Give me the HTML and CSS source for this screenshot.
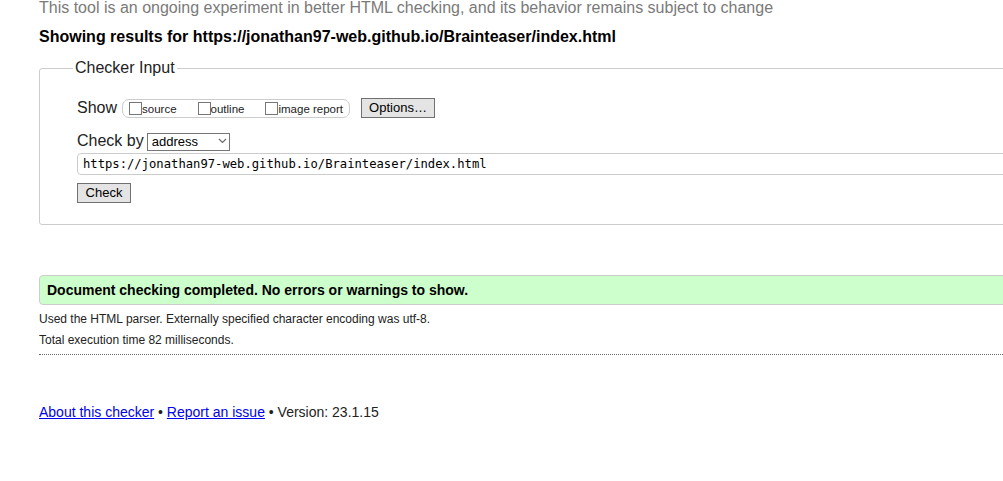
FILE: index.html
```html
<!DOCTYPE html>
<html lang="en">
<head>
<meta charset="utf-8">
<title>Nu Html Checker</title>
<link rel="stylesheet" href="styles.css">
</head>
<body>
<div class="page">
  <p class="intro">This tool is an ongoing experiment in better HTML checking, and its behavior remains subject to change</p>
  <p class="results-for">Showing results for https://jonathan97-web.github.io/Brainteaser/index.html</p>
  <fieldset class="checker">
    <legend class="checker-legend">Checker Input</legend>
    <div class="row show-row">
      <span class="row-label">Show</span>
      <span class="show-box">
        <label class="opt"><input class="cb" type="checkbox">source</label>
        <label class="opt"><input class="cb" type="checkbox">outline</label>
        <label class="opt opt-last"><input class="cb" type="checkbox">image report</label>
      </span>
      <button class="btn btn-options" type="button">Options…</button>
    </div>
    <div class="row by-row">
      <span class="row-label">Check by</span>
      <span class="select-wrap">
        <select class="select"><option>address</option></select>
        <svg class="chevron" width="9" height="6" viewBox="0 0 9 6"><path d="M1 1 L4.5 4.5 L8 1" fill="none" stroke="#6b6b6b" stroke-width="1.2"/></svg>
      </span>
    </div>
    <div class="row url-row">
      <input class="url" type="text" value="https://jonathan97-web.github.io/Brainteaser/index.html">
    </div>
    <div class="row check-row">
      <button class="btn btn-check" type="submit">Check</button>
    </div>
  </fieldset>
  <div class="success">Document checking completed. No errors or warnings to show.</div>
  <p class="details details-first">Used the HTML parser. Externally specified character encoding was utf-8.</p>
  <p class="details">Total execution time 82 milliseconds.</p>
  <hr class="sep">
  <p class="footer"><a class="link" href="#">About this checker</a> • <a class="link" href="#">Report an issue</a> • Version: 23.1.15</p>
</div>
</body>
</html>
```

FILE: styles.css
```css
html {
  overflow: hidden;
}
body {
  margin: 0;
  background: #fff;
  color: #000;
  font-family: "Liberation Sans", Arial, sans-serif;
}
.page {
  width: 1150px;
  padding-left: 39px;
}
.intro {
  margin: -1px 0 0;
  font-size: 16px;
  line-height: 18px;
  color: #7a7a7a;
  white-space: nowrap;
}
.results-for {
  margin: 11px 0 0;
  font-size: 16px;
  line-height: 18px;
  font-weight: bold;
  white-space: nowrap;
}
.checker {
  margin: 13px 0 0;
  padding: 0 0 21px 33px;
  border: 1px solid #cccccc;
  border-radius: 3px;
  min-width: 0;
}
.checker-legend {
  padding: 0 2px;
  font-size: 16px;
  line-height: 18px;
  color: #222;
}
.row {
  display: flex;
  align-items: center;
  margin-left: 4px;
}
.row-label {
  font-size: 16px;
  line-height: 18px;
  color: #222;
}
.show-row {
  margin-top: 21px;
  height: 20px;
}
.show-box {
  display: inline-flex;
  align-items: flex-end;
  box-sizing: border-box;
  height: 19px;
  margin-left: 5px;
  padding: 0 6px 2px 6px;
  border: 1px solid #cccccc;
  border-radius: 7px;
}
.opt {
  display: inline-flex;
  align-items: flex-end;
  margin-right: 21px;
  font-size: 11.5px;
  line-height: 12px;
  color: #222;
}
.opt-last {
  margin-right: 0;
}
.cb {
  appearance: none;
  -webkit-appearance: none;
  box-sizing: border-box;
  width: 13px;
  height: 13px;
  margin: 0;
  border: 1px solid #767676;
  background: #fff;
}
.btn {
  box-sizing: border-box;
  height: 20px;
  padding: 0 7px;
  border: 1px solid #707070;
  border-radius: 0;
  background: #e4e4e4;
  color: #000;
  font-family: "Liberation Sans", Arial, sans-serif;
  font-size: 13px;
  line-height: 18px;
}
.btn-options {
  margin-left: 11px;
  width: 74px;
}
.btn-check {
  width: 54px;
}
.by-row {
  margin-top: 14px;
  height: 18px;
}
.select-wrap {
  position: relative;
  display: inline-block;
  margin-left: 3px;
  height: 18px;
}
.select {
  appearance: none;
  -webkit-appearance: none;
  box-sizing: border-box;
  width: 83px;
  height: 18px;
  margin: 0;
  padding: 0 0 0 4px;
  border: 1px solid #767676;
  border-radius: 0;
  background: #fff;
  color: #000;
  font-family: "Liberation Sans", Arial, sans-serif;
  font-size: 13px;
  line-height: 16px;
}
.chevron {
  position: absolute;
  left: 71px;
  top: 6px;
  pointer-events: none;
}
.url-row {
  margin-top: 3px;
}
.url {
  box-sizing: border-box;
  width: 1100px;
  height: 22px;
  margin: 0;
  padding: 0 5px;
  border: 1px solid #cccccc;
  border-radius: 4px;
  background: #fff;
  color: #000;
  font-family: "DejaVu Sans Mono", "Liberation Mono", monospace;
  font-size: 12.2px;
}
.check-row {
  margin-top: 8px;
}
.success {
  box-sizing: border-box;
  margin-top: 50px;
  height: 30px;
  padding: 0 0 0 7px;
  border: 1px solid #cccccc;
  border-radius: 4px;
  background: #ccffcc;
  font-size: 14px;
  line-height: 28px;
  font-weight: bold;
  white-space: nowrap;
}
.details {
  margin: 6px 0 0;
  font-size: 12px;
  line-height: 15px;
  color: #222;
}
.details-first {
  margin-top: 7px;
}
.sep {
  margin: 6px 0 0;
  height: 0;
  border: 0;
  border-top: 1px dotted #666;
}
.footer {
  margin: 49px 0 0;
  font-size: 14px;
  line-height: 16px;
  color: #222;
}
.link {
  color: #0000ee;
  text-decoration: underline;
}
```
